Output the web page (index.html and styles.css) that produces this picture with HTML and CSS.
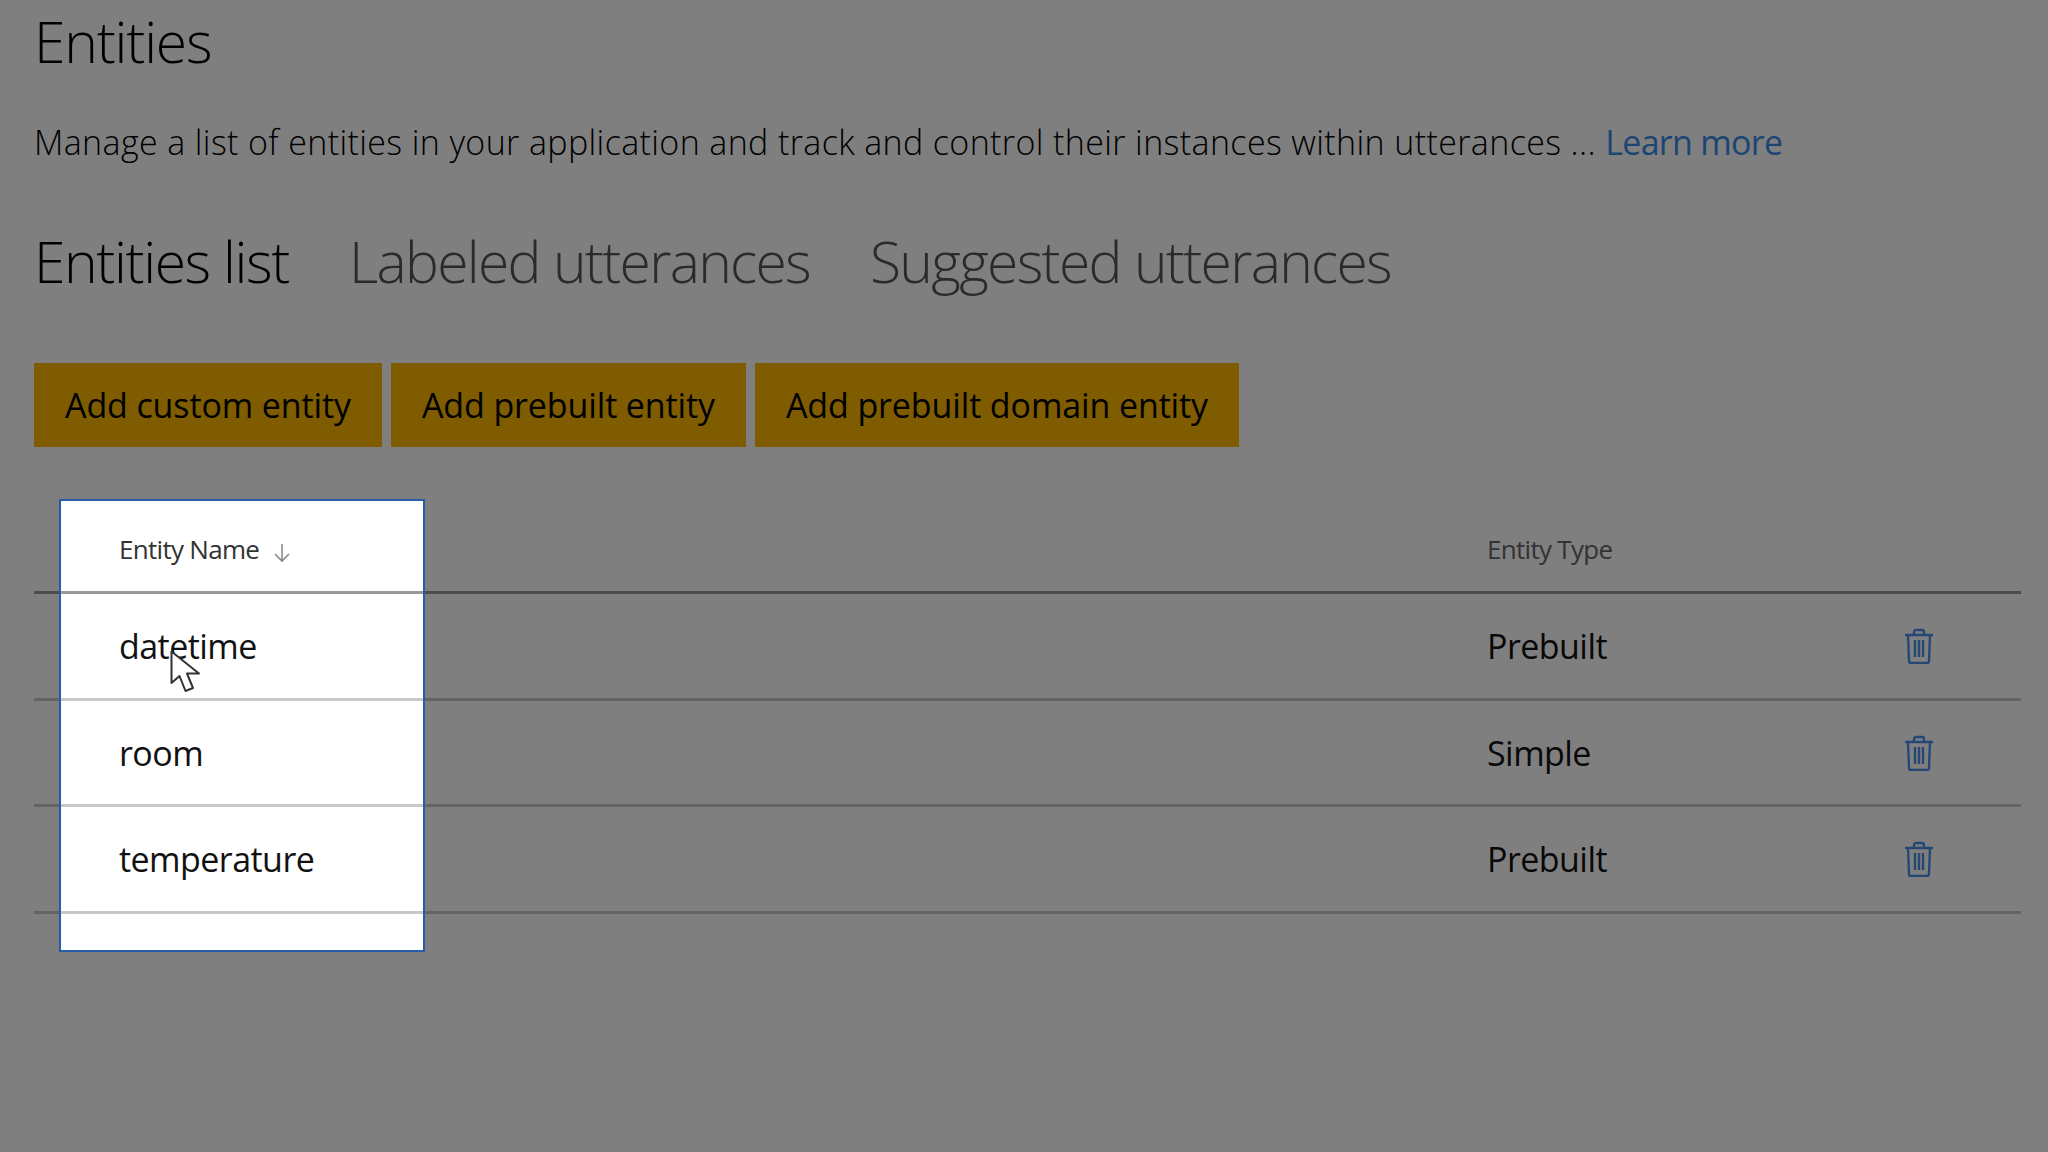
FILE: index.html
```html
<!DOCTYPE html>
<html lang="en">

<head>
    <meta charset="UTF-8">
    <title>Entities</title>
    <link rel="stylesheet" href="styles.css">
</head>

<body>
    <div class="page">
        <h1 class="title">Entities</h1>
        <p class="intro">Manage a list of entities in your application and track and control their instances within utterances ... <a class="learn" href="#">Learn more</a></p>

        <div class="tabs">
            <span class="tab tab-active">Entities list</span>
            <span class="tab">Labeled utterances</span>
            <span class="tab">Suggested utterances</span>
        </div>

        <div class="actions">
            <button class="btn">Add custom entity</button>
            <button class="btn">Add prebuilt entity</button>
            <button class="btn">Add prebuilt domain entity</button>
        </div>

        <div class="table">
            <div class="row head">
                <div class="col-name">Entity Name
                    <svg class="sort" viewBox="0 0 18 20" width="18" height="20">
                        <path d="M9 1V18M2 11l7 7 7-7" fill="none" stroke="#8a8a8a" stroke-width="1.6"/>
                    </svg>
                </div>
                <div class="col-type">Entity Type</div>
            </div>
            <div class="row">
                <div class="col-name">datetime</div>
                <div class="col-type">Prebuilt</div>
                <svg class="trash" viewBox="0 0 30 36" width="30" height="36">
                    <path d="M1 7H29M10 7V4a2 2 0 0 1 2-2h6a2 2 0 0 1 2 2v3M4 7l1 26a2 2 0 0 0 2 2h16a2 2 0 0 0 2-2l1-26M11 12V29M15 12V29M19 12V29"/>
                </svg>
            </div>
            <div class="row row-short">
                <div class="col-name">room</div>
                <div class="col-type">Simple</div>
                <svg class="trash" viewBox="0 0 30 36" width="30" height="36">
                    <path d="M1 7H29M10 7V4a2 2 0 0 1 2-2h6a2 2 0 0 1 2 2v3M4 7l1 26a2 2 0 0 0 2 2h16a2 2 0 0 0 2-2l1-26M11 12V29M15 12V29M19 12V29"/>
                </svg>
            </div>
            <div class="row">
                <div class="col-name">temperature</div>
                <div class="col-type">Prebuilt</div>
                <svg class="trash" viewBox="0 0 30 36" width="30" height="36">
                    <path d="M1 7H29M10 7V4a2 2 0 0 1 2-2h6a2 2 0 0 1 2 2v3M4 7l1 26a2 2 0 0 0 2 2h16a2 2 0 0 0 2-2l1-26M11 12V29M15 12V29M19 12V29"/>
                </svg>
            </div>
        </div>
    </div>

    <!-- dimmed page with a hole over the first column -->
    <div class="spotlight"></div>

    <svg class="cursor" viewBox="0 0 32 44" width="32" height="44">
        <path d="M1.5 1.500V33L9.500 26l6 15 7.500-3-6-14.500h12z" fill="#fff" stroke="#333" stroke-width="2" stroke-linejoin="round"/>
    </svg>
</body>

</html>
```

FILE: styles.css
```css
html,
body {
    margin: 0;
    height: 100%;
    overflow: hidden;
    background: #fff;
}

body {
    font-family: "Open Sans", "Noto Sans", sans-serif;
    color: #000;
}

.page {
    padding: 0 27px 0 34px;
}

.title {
    margin: 0;
    padding-top: 1px;
    font-size: 57px;
    line-height: 80px;
    font-weight: 300;
    letter-spacing: -1.2px;
}

.intro {
    margin: 0;
    padding-top: 36px;
    font-size: 34px;
    line-height: 50px;
    font-weight: 300;
    letter-spacing: 0.37px;
}

.learn {
    color: #3a8ae8;
    font-weight: 400;
    letter-spacing: -0.7px;
    text-decoration: none;
}

.tabs {
    display: flex;
    gap: 60px;
    padding-top: 54px;
    font-size: 57px;
    line-height: 80px;
    font-weight: 300;
    letter-spacing: -1.7px;
}

.tab {
    color: #555;
}

.tab-active {
    color: #000;
    letter-spacing: -1.4px;
}

.actions {
    display: flex;
    gap: 9px;
    padding-top: 62px;
}

.btn {
    height: 84px;
    padding: 0 31px;
    border: none;
    background: #ffb900;
    color: #000;
    font: inherit;
    font-size: 34px;
    letter-spacing: -0.12px;
}

.table {
    padding-top: 52px;
}

.row {
    display: grid;
    grid-template-columns: 1453px 417px 1fr;
    align-items: center;
    height: 104px;
    border-bottom: 3px solid #c8c8c8;
    color: #111;
    font-size: 34px;
    letter-spacing: -0.55px;
}

.row-short {
    height: 103px;
}

.head {
    height: 84px;
    padding-top: 8px;
    border-bottom-color: #999;
    color: #333;
    font-size: 26px;
    letter-spacing: -0.7px;
}

.col-name {
    padding-left: 85px;
}

.head .col-type {
    color: #666;
}

.sort {
    margin-left: 8px;
    vertical-align: -4px;
}

.trash {
    fill: none;
    stroke: #4a8fe8;
    stroke-width: 2.4;
}

.spotlight {
    position: absolute;
    left: 59px;
    top: 499px;
    width: 362px;
    height: 449px;
    border: 2px solid #2b5aa8;
    box-shadow: 0 0 0 3000px rgba(0, 0, 0, 0.5);
}

.cursor {
    position: absolute;
    left: 170px;
    top: 650px;
}
```
